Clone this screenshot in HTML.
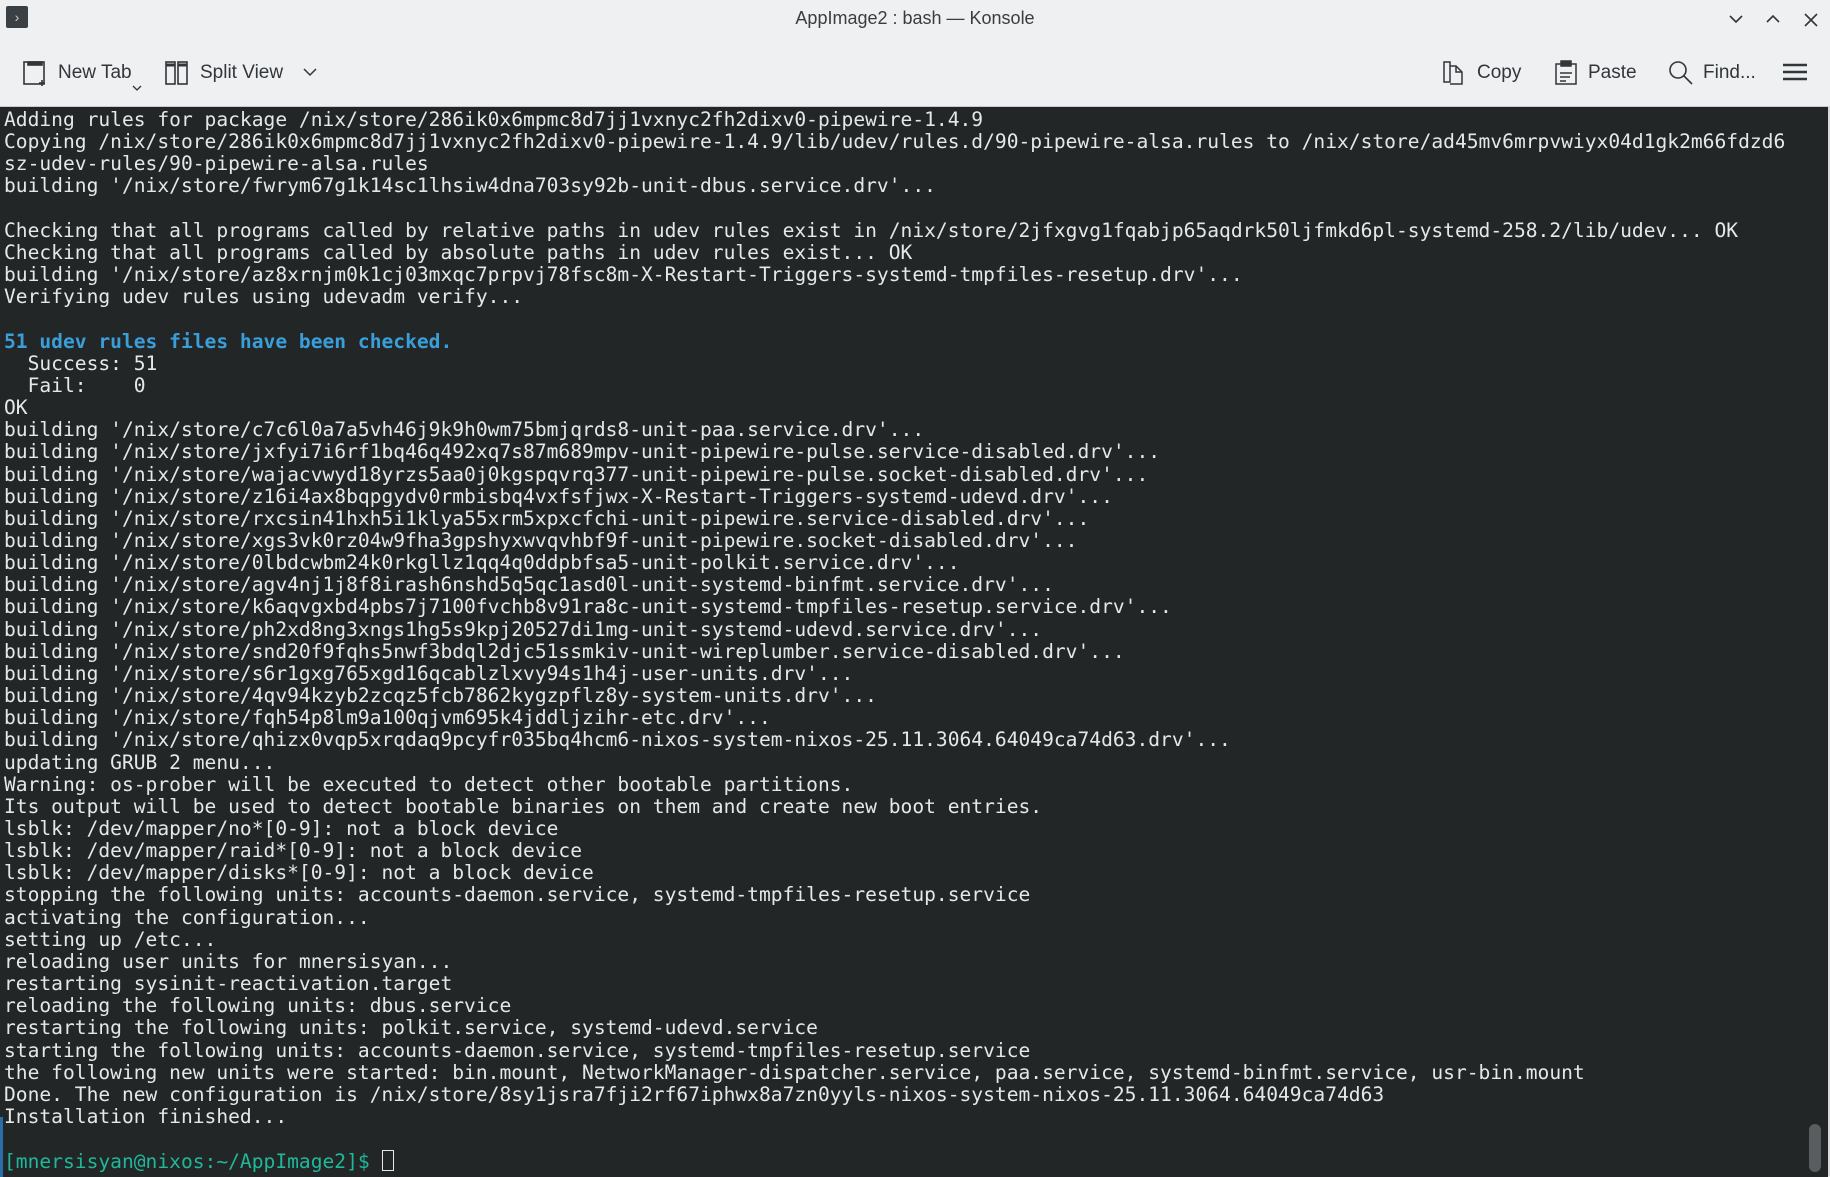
<!DOCTYPE html>
<html><head><meta charset="utf-8"><style>
html,body{margin:0;padding:0;width:1830px;height:1176px;overflow:hidden;background:#eff0f1;font-family:"Liberation Sans","DejaVu Sans",sans-serif}
#title{position:absolute;left:0;top:0;width:1830px;height:36px;text-align:center;line-height:36px;font-size:18px;color:#3a3d40}
#appicon{position:absolute;left:6px;top:6px;width:22px;height:22px;background:#3b4045;border-radius:2px;color:#ccc;font-size:14px;line-height:22px;text-align:center}
.tb{position:absolute;top:60px;font-size:19px;color:#31363b;line-height:26px}
#term{position:absolute;left:0;top:106px;width:1828px;height:1070px;background:#232627;border-top:1px solid #c8cacc}
pre{margin:0;position:absolute;left:4px;top:2px;font-family:"DejaVu Sans Mono","Liberation Mono",monospace;font-size:19.6px;line-height:22.15px;color:#e6e7e8}
.b{color:#3a9ed9;font-weight:bold}.g{color:#1fb89a}
#rb{position:absolute;left:1828px;top:106px;width:2px;height:1070px;background:#d8dadc}
#thumb{position:absolute;left:1809px;top:1124px;width:12px;height:48px;border-radius:6px;background:#5a5d60}
svg{position:absolute}
</style></head><body>
<div id="appicon">›</div>
<div id="title">AppImage2 : bash — Konsole</div>
<svg style="left:1725px;top:10px" width="100" height="20" viewBox="0 0 100 20" fill="none" stroke="#31363b" stroke-width="1.6"><path d="M5 6l6 6 6-6"/><path d="M42 12l6-6 6 6"/><path d="M80 4l12 12M92 4l-12 12"/></svg>
<svg style="left:22px;top:59px" width="28" height="30" viewBox="0 0 28 30" fill="none" stroke="#31363b" stroke-width="1.6"><rect x="2" y="3" width="20" height="22"/><rect x="6" y="3" width="14" height="3" fill="#31363b"/><path d="M20 21v6M17 24h6"/></svg>
<div class="tb" style="left:58px">New Tab</div>
<svg style="left:132px;top:84px" width="10" height="8"><path d="M1 2l4 4 4-4" stroke="#31363b" fill="none" stroke-width="1.3"/></svg>
<svg style="left:165px;top:60px" width="24" height="26" viewBox="0 0 24 26" fill="none" stroke="#31363b" stroke-width="1.6"><rect x="1" y="2" width="9" height="22"/><rect x="13" y="2" width="9" height="22"/><path d="M1 5h9M13 5h9" stroke-width="3"/></svg>
<div class="tb" style="left:200px">Split View</div>
<svg style="left:302px;top:66px" width="16" height="12"><path d="M2 3l6 6 6-6" stroke="#31363b" fill="none" stroke-width="1.5"/></svg>
<svg style="left:1442px;top:60px" width="24" height="26" viewBox="0 0 24 26" fill="none" stroke="#31363b" stroke-width="1.5"><path d="M2 2h6v20H2z"/><path d="M8 6h6l6 6v12H8"/><path d="M14 6v6h6"/></svg>
<div class="tb" style="left:1477px">Copy</div>
<svg style="left:1554px;top:60px" width="24" height="26" viewBox="0 0 24 26" fill="none" stroke="#31363b" stroke-width="1.5"><rect x="2" y="4" width="20" height="20"/><rect x="7" y="1" width="10" height="5" fill="#31363b"/><path d="M6 13h12M6 17h10M6 21h6"/></svg>
<div class="tb" style="left:1588px">Paste</div>
<svg style="left:1668px;top:60px" width="26" height="26" viewBox="0 0 26 26" fill="none" stroke="#31363b" stroke-width="1.6"><circle cx="10" cy="10" r="8"/><path d="M16 16l8 8"/></svg>
<div class="tb" style="left:1703px">Find...</div>
<svg style="left:1783px;top:62px" width="24" height="20"><path d="M0 3h24M0 10h24M0 17h24" stroke="#31363b" stroke-width="2.4"/></svg>
<div id="term"><pre>Adding rules for package /nix/store/286ik0x6mpmc8d7jj1vxnyc2fh2dixv0-pipewire-1.4.9
Copying /nix/store/286ik0x6mpmc8d7jj1vxnyc2fh2dixv0-pipewire-1.4.9/lib/udev/rules.d/90-pipewire-alsa.rules to /nix/store/ad45mv6mrpvwiyx04d1gk2m66fdzd6
sz-udev-rules/90-pipewire-alsa.rules
building '/nix/store/fwrym67g1k14sc1lhsiw4dna703sy92b-unit-dbus.service.drv'...

Checking that all programs called by relative paths in udev rules exist in /nix/store/2jfxgvg1fqabjp65aqdrk50ljfmkd6pl-systemd-258.2/lib/udev... OK
Checking that all programs called by absolute paths in udev rules exist... OK
building '/nix/store/az8xrnjm0k1cj03mxqc7prpvj78fsc8m-X-Restart-Triggers-systemd-tmpfiles-resetup.drv'...
Verifying udev rules using udevadm verify...

<span class="b">51 udev rules files have been checked.</span>
  Success: 51
  Fail:    0
OK
building '/nix/store/c7c6l0a7a5vh46j9k9h0wm75bmjqrds8-unit-paa.service.drv'...
building '/nix/store/jxfyi7i6rf1bq46q492xq7s87m689mpv-unit-pipewire-pulse.service-disabled.drv'...
building '/nix/store/wajacvwyd18yrzs5aa0j0kgspqvrq377-unit-pipewire-pulse.socket-disabled.drv'...
building '/nix/store/z16i4ax8bqpgydv0rmbisbq4vxfsfjwx-X-Restart-Triggers-systemd-udevd.drv'...
building '/nix/store/rxcsin41hxh5i1klya55xrm5xpxcfchi-unit-pipewire.service-disabled.drv'...
building '/nix/store/xgs3vk0rz04w9fha3gpshyxwvqvhbf9f-unit-pipewire.socket-disabled.drv'...
building '/nix/store/0lbdcwbm24k0rkgllz1qq4q0ddpbfsa5-unit-polkit.service.drv'...
building '/nix/store/agv4nj1j8f8irash6nshd5q5qc1asd0l-unit-systemd-binfmt.service.drv'...
building '/nix/store/k6aqvgxbd4pbs7j7100fvchb8v91ra8c-unit-systemd-tmpfiles-resetup.service.drv'...
building '/nix/store/ph2xd8ng3xngs1hg5s9kpj20527di1mg-unit-systemd-udevd.service.drv'...
building '/nix/store/snd20f9fqhs5nwf3bdql2djc51ssmkiv-unit-wireplumber.service-disabled.drv'...
building '/nix/store/s6r1gxg765xgd16qcablzlxvy94s1h4j-user-units.drv'...
building '/nix/store/4qv94kzyb2zcqz5fcb7862kygzpflz8y-system-units.drv'...
building '/nix/store/fqh54p8lm9a100qjvm695k4jddljzihr-etc.drv'...
building '/nix/store/qhizx0vqp5xrqdaq9pcyfr035bq4hcm6-nixos-system-nixos-25.11.3064.64049ca74d63.drv'...
updating GRUB 2 menu...
Warning: os-prober will be executed to detect other bootable partitions.
Its output will be used to detect bootable binaries on them and create new boot entries.
lsblk: /dev/mapper/no*[0-9]: not a block device
lsblk: /dev/mapper/raid*[0-9]: not a block device
lsblk: /dev/mapper/disks*[0-9]: not a block device
stopping the following units: accounts-daemon.service, systemd-tmpfiles-resetup.service
activating the configuration...
setting up /etc...
reloading user units for mnersisyan...
restarting sysinit-reactivation.target
reloading the following units: dbus.service
restarting the following units: polkit.service, systemd-udevd.service
starting the following units: accounts-daemon.service, systemd-tmpfiles-resetup.service
the following new units were started: bin.mount, NetworkManager-dispatcher.service, paa.service, systemd-binfmt.service, usr-bin.mount
Done. The new configuration is /nix/store/8sy1jsra7fji2rf67iphwx8a7zn0yyls-nixos-system-nixos-25.11.3064.64049ca74d63
Installation finished...

<span class="g">[mnersisyan@nixos:~/AppImage2]$</span> <span style="display:inline-block;width:10px;height:19px;border:1.5px solid #e6e7e8;vertical-align:-3px"></span></pre>
<div style="position:absolute;left:0;top:1010px;width:3px;height:60px;background:#2a6ea8"></div>
</div>
<div id="rb"></div>
<div id="thumb"></div>
</body></html>
